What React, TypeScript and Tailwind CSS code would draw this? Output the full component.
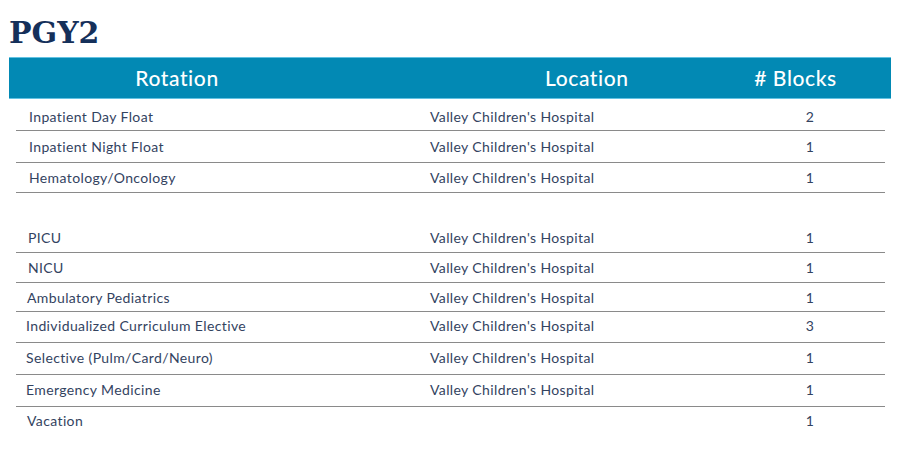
import React from "react";

type Row = { r: string; l: string; b: string; pl: string };

const group1: Row[] = [
  { r: "Inpatient Day Float", l: "Valley Children's Hospital", b: "2", pl: "pl-[13px]" },
  { r: "Inpatient Night Float", l: "Valley Children's Hospital", b: "1", pl: "pl-[13px]" },
  { r: "Hematology/Oncology", l: "Valley Children's Hospital", b: "1", pl: "pl-[13px]" },
];

const group2: Row[] = [
  { r: "PICU", l: "Valley Children's Hospital", b: "1", pl: "pl-[12px]" },
  { r: "NICU", l: "Valley Children's Hospital", b: "1", pl: "pl-[12px]" },
  { r: "Ambulatory Pediatrics", l: "Valley Children's Hospital", b: "1", pl: "pl-[11px]" },
  { r: "Individualized Curriculum Elective", l: "Valley Children's Hospital", b: "3", pl: "pl-[10px]" },
  { r: "Selective (Pulm/Card/Neuro)", l: "Valley Children's Hospital", b: "1", pl: "pl-[10px]" },
  { r: "Emergency Medicine", l: "Valley Children's Hospital", b: "1", pl: "pl-[10px]" },
  { r: "Vacation", l: "", b: "1", pl: "pl-[11px]" },
];

function TRow({ row, last, h }: { row: Row; last?: boolean; h: string }) {
  return (
    <div
      className={`grid grid-cols-[401px_318px_1fr] items-center ${h} ${
        last ? "" : "border-b border-[#8a8a8a]"
      }`}
    >
      <div className={row.pl}>{row.r}</div>
      <div className="pl-[13px]">{row.l}</div>
      <div className="text-center">{row.b}</div>
    </div>
  );
}

export default function App() {
  const heights1 = ["h-[32px] pt-[3px]", "h-[32px]", "h-[30px]"];
  const heights2 = [
    "h-[30px]",
    "h-[30px]",
    "h-[29px]",
    "h-[31px] pb-[3px]",
    "h-[32px] pb-[2px]",
    "h-[32px] pb-[3px]",
    "h-[30px] pb-[3px]",
  ];
  return (
    <div className="w-[900px] h-[450px] bg-white overflow-hidden">
      <div className="pl-[9px] pt-[14px]">
        <h1
          className="text-[30px] leading-[37px] font-bold text-[#15305a]"
          style={{ fontFamily: '"DejaVu Serif", serif' }}
        >
          PGY2
        </h1>
      </div>
      <div className="mx-[9px] mt-[6px] w-[882px]">
        <div
          className="grid grid-cols-[336px_355px_1fr] items-center h-[42px] bg-[#0289b4] border-t border-b border-[#63c2e2] text-white text-[21px] tracking-[0.6px] font-medium"
          style={{ fontFamily: "Lato, sans-serif" }}
        >
          <div className="text-center">Rotation</div>
          <div className="pl-[200px]">Location</div>
          <div className="text-center"># Blocks</div>
        </div>
        <div
          className="ml-[7px] w-[869px] text-[14px] tracking-[0.38px] text-[#33435f]"
          style={{ fontFamily: "Lato, sans-serif" }}
        >
          {group1.map((row, i) => (
            <TRow key={row.r} row={row} h={heights1[i]} />
          ))}
          <div className="h-[30px]" />
          {group2.map((row, i) => (
            <TRow key={row.r} row={row} h={heights2[i]} last={i === group2.length - 1} />
          ))}
        </div>
      </div>
    </div>
  );
}
